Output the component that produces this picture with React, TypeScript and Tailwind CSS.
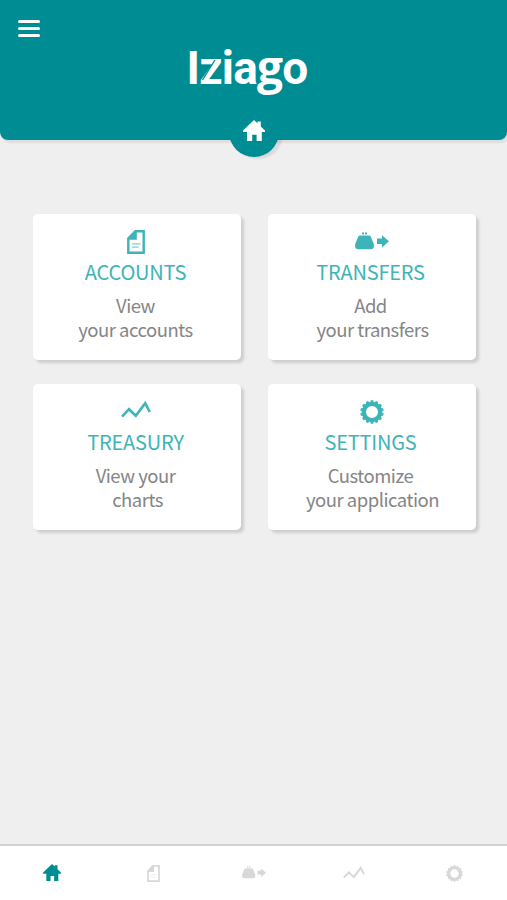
import type { ComponentType } from 'react';
import clsx from 'clsx';

type IconProps = { className?: string };

function HomeIcon({ className }: IconProps) {
  return (
    <svg viewBox="0 0 22 21" fill="currentColor" className={className}>
      <path d="M11 0 L14.4 3.2 V1.4 H17.8 V6.4 L22 10.4 V12 H18.8 V21 H13.6 V14.8 H9.2 V21 H4 V12 H0 V10.4 Z" />
    </svg>
  );
}

function DocumentIcon({ className }: IconProps) {
  return (
    <svg viewBox="0 0 18 24" fill="none" className={className}>
      <path d="M8.4 1.3 H16.7 V22.7 H1.3 V8.6 Z" stroke="currentColor" strokeWidth="2.4" />
      <path d="M8 0.6 H9.8 V9.8 H0.6 V8 Z" fill="currentColor" />
      <path d="M5 13.8 H13.4 M5 17.2 H11.8" stroke="currentColor" strokeWidth="1.2" opacity="0.65" />
    </svg>
  );
}

function PurseIcon({ className }: IconProps) {
  return (
    <svg viewBox="0 0 34 18" fill="currentColor" className={className}>
      <circle cx="8" cy="1.4" r="1.1" />
      <circle cx="11" cy="1.4" r="1.1" />
      <path d="M4.6 3.4 H14.4 Q15.6 3.6 15.8 4.8 L18.6 11.6 Q20 17.2 15.8 17.2 H3.2 Q-1 17.2 0.4 11.6 L3.2 4.8 Q3.4 3.6 4.6 3.4 Z" />
      <path d="M22 6.6 H27 V3.2 L34 9.3 L27 15.4 V12 H22 Z" />
    </svg>
  );
}

function ChartIcon({ className }: IconProps) {
  return (
    <svg viewBox="0 0 30 17" fill="none" className={className}>
      <path d="M1 15.6 L8 8.2 L14.8 14.8 L24.2 2.2 L28.8 11" stroke="currentColor" strokeWidth="2.6" />
    </svg>
  );
}

function GearIcon({ className }: IconProps) {
  const teeth = Array.from({ length: 14 }, (_, i) => (i * 360) / 14);
  return (
    <svg viewBox="0 0 24 24" className={className}>
      <circle cx="12" cy="12" r="8.1" fill="none" stroke="currentColor" strokeWidth="4.2" />
      {teeth.map((angle) => (
        <path key={angle} d="M10 3 L10.8 0.3 H13.2 L14 3 Z" fill="currentColor" transform={`rotate(${angle} 12 12)`} />
      ))}
    </svg>
  );
}

type CardData = {
  title: string;
  line1: string;
  line2: string;
  indent?: boolean;
  Icon: ComponentType<IconProps>;
  iconClass: string;
};

const cards: CardData[] = [
  { title: 'ACCOUNTS', line1: 'View', line2: 'your accounts', Icon: DocumentIcon, iconClass: 'h-6 w-[18px]' },
  { title: 'TRANSFERS', line1: 'Add', line2: 'your transfers', indent: true, Icon: PurseIcon, iconClass: 'mb-0.5 ml-0.5 h-[18px] w-[34px]' },
  { title: 'TREASURY', line1: 'View your', line2: 'charts', indent: true, Icon: ChartIcon, iconClass: 'mb-1 h-[17px] w-[30px]' },
  { title: 'SETTINGS', line1: 'Customize', line2: 'your application', indent: true, Icon: GearIcon, iconClass: 'ml-0.5 h-6 w-6' },
];

const tabs = [
  { name: 'Home', Icon: HomeIcon, iconClass: 'mr-0.5 mb-0.5 h-[17px] w-[18px]', active: true },
  { name: 'Accounts', Icon: DocumentIcon, iconClass: 'h-[17px] w-[13px]' },
  { name: 'Transfers', Icon: PurseIcon, iconClass: 'mb-0.5 h-[13px] w-6' },
  { name: 'Treasury', Icon: ChartIcon, iconClass: 'mb-0.5 h-[13px] w-[22px]' },
  { name: 'Settings', Icon: GearIcon, iconClass: 'h-[17px] w-[17px]' },
];

function Card({ title, line1, line2, indent, Icon, iconClass }: CardData) {
  return (
    <button className="flex h-[146.5px] flex-col items-center rounded-[5px] bg-white pr-0.5 shadow-[3px_3px_3px_rgba(0,0,0,0.14)]">
      <span className="mt-4 flex h-6 items-center text-[#3db4b8]">
        <Icon className={iconClass} />
      </span>
      <span className="mt-1 text-[20px] leading-[28px] tracking-[-0.2px] text-[#3db4b8]">{title}</span>
      <span className="mt-[7px] text-[18.5px] leading-[24.5px] tracking-[-0.5px] text-[#858585]">
        {line1}
        <span className={clsx('block', indent && 'pl-1')}>{line2}</span>
      </span>
    </button>
  );
}

function Logo() {
  return (
    <h1 className="flex justify-center pt-[42px] pr-[13px] font-[Roboto,sans-serif] text-[46px] leading-[52px] font-bold tracking-[-0.8px] text-white">
      <span className="relative">
        Izia
        <span className="font-['Open_Sans',sans-serif] leading-none">g</span>
        o
        {/* slit cut into the z */}
        <svg viewBox="0 0 16 24" className="absolute top-[18px] left-[14px] h-6 w-4">
          <path d="M14 0 L1.5 20" stroke="#008c93" strokeWidth="1.3" />
        </svg>
      </span>
    </h1>
  );
}

function Header() {
  return (
    <header className="relative h-[140px] rounded-b-[8px] bg-[#008c93] shadow-[2px_3px_2px_rgba(0,0,0,0.07)]">
      <button aria-label="Menu" className="absolute top-5 left-[18px] flex flex-col gap-[3.5px]">
        <span className="h-[3.4px] w-[22px] rounded-full bg-white" />
        <span className="h-[3.4px] w-[22px] rounded-full bg-white" />
        <span className="h-[3.4px] w-[22px] rounded-full bg-white" />
      </button>
      <Logo />
      <div className="absolute top-[107px] left-[229px] size-[50px] rounded-full bg-[#008c93] shadow-[4px_2px_2px_rgba(0,0,0,0.09)] [clip-path:inset(33px_-8px_-8px_-8px)]" />
      <HomeIcon className="absolute top-[120px] left-[243px] h-[21px] w-[22px] text-white" />
    </header>
  );
}

export default function App() {
  return (
    <div className="flex h-[900px] w-[507px] flex-col overflow-hidden bg-[#efefef] font-['Noto_Sans_CJK_SC',sans-serif]">
      <Header />
      <main className="grid flex-1 grid-cols-[208px_208px] content-start gap-x-[27px] gap-y-[23.5px] pt-[73.5px] pl-[32.5px]">
        {cards.map((card) => (
          <Card key={card.title} {...card} />
        ))}
      </main>
      <nav className="grid h-14 grid-cols-5 items-center border-t-2 border-[#d3d3d3] bg-white pr-[2px] pl-[3px]">
        {tabs.map(({ name, Icon, iconClass, active }) => (
          <button key={name} aria-label={name} className={clsx('flex justify-center', active ? 'text-[#008c93]' : 'text-[#d8d8d8]')}>
            <Icon className={iconClass} />
          </button>
        ))}
      </nav>
    </div>
  );
}
